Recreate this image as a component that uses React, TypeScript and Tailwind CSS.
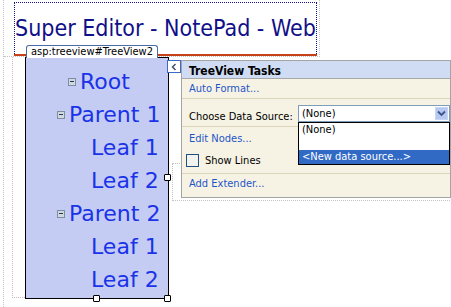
import React from 'react';

const ui = "font-['DejaVu_Sans',sans-serif] [font-stretch:condensed]";

const ExpandBox = () => (
  <span className="inline-flex w-[8px] h-[8px] items-center justify-center border border-[#7b8ea3] bg-[#d2d8e0]">
    <span className="block w-[4px] h-[1px] bg-[#22364f]" />
  </span>
);

const TreeRow = ({ label, indent, expandable }: { label: string; indent: string; expandable?: boolean }) => (
  <div className={`flex items-center h-[33px] ${indent}`}>
    {expandable && (
      <span className="mr-[4px] flex">
        <ExpandBox />
      </span>
    )}
    <span>{label}</span>
  </div>
);

const Handle = ({ className }: { className: string }) => (
  <div className={`absolute w-[7px] h-[7px] bg-white border border-black rounded-[1px] ${className}`} />
);

export default function App() {
  return (
    <div className="relative w-[451px] h-[307px] bg-white overflow-hidden">
      {/* design surface guides */}
      <div className="absolute left-[3px] top-0 h-[307px] border-l border-dotted border-[#c4c4c4]" />
      <div className="absolute left-[12px] top-[57px] w-[13px] h-[241px] border-l border-b border-dotted border-[#d0b8b8]" />
      <div className="absolute left-[172px] top-[163px] w-[300px] h-[38px] border-l border-t border-b border-dotted border-[#c4c4c4]" />

      {/* heading block */}
      <div className="ml-[4px] w-[316px] h-[57px] pt-[2px] border-r border-b border-dotted border-[#c4c4c4]">
        <h1
          className={`ml-[10px] w-[303px] h-[52px] pt-[14px] border-t border-l border-r border-dotted border-[#101088] text-[23px] leading-[23px] text-[#101088] whitespace-nowrap ${ui}`}
        >
          Super Editor - NotePad - Web
        </h1>
        <div className="ml-[10px] w-[303px] h-[2px] bg-[#c8401a]" />
      </div>

      {/* treeview control */}
      <div className="ml-[25px] w-[144px] h-[242px] border border-black bg-[#c4ccf4] pt-[7px] font-['DejaVu_Sans',sans-serif] text-[22px] leading-[33px] text-[#1a33e8] whitespace-nowrap">
        <TreeRow label="Root" indent="pl-[42px]" expandable />
        <TreeRow label="Parent 1" indent="pl-[31px]" expandable />
        <TreeRow label="Leaf 1" indent="pl-[65px]" />
        <TreeRow label="Leaf 2" indent="pl-[65px]" />
        <TreeRow label="Parent 2" indent="pl-[31px]" expandable />
        <TreeRow label="Leaf 1" indent="pl-[65px]" />
        <TreeRow label="Leaf 2" indent="pl-[65px]" />
      </div>

      {/* control tag */}
      <div
        className={`absolute left-[26px] top-[45px] h-[13px] px-[4px] bg-white border border-b-0 border-[#4a6aa8] rounded-t-[3px] text-[11px] leading-[12px] text-black ${ui}`}
      >
        asp:treeview#TreeView2
      </div>

      <Handle className="left-[164px] top-[174px]" />
      <Handle className="left-[93px] top-[295px]" />
      <Handle className="left-[164px] top-[295px]" />

      {/* smart tag glyph */}
      <div className="absolute left-[167px] top-[60px] w-[14px] h-[13px] bg-white border border-[#3a6ac8] flex items-center justify-center">
        <svg width="6" height="8" viewBox="0 0 6 8">
          <path d="M4.5 1 L1.5 4 L4.5 7" fill="none" stroke="#3a4a6a" strokeWidth="1.4" />
        </svg>
      </div>

      {/* tasks panel */}
      <div className={`absolute left-[181px] top-[60px] w-[270px] h-[138px] border border-[#a4a4a4] bg-[#f6f3e4] text-[11px] leading-[13px] ${ui}`}>
        <div className="h-[18px] pt-[3px] pl-[7px] bg-[#cfdcf3] border-b border-[#a8a8a8] text-[12px] leading-[14px] font-bold text-black">
          TreeView Tasks
        </div>
        <div className="h-[20px] pt-[3px] pl-[7px] border-b border-[#dcd5ba] text-[#1f55c8]">Auto Format...</div>
        <div className="flex items-start h-[28px] pl-[7px] border-b border-[#dcd5ba] text-black">
          <div className="w-[109px] pt-[11px]">Choose Data Source:</div>
          <div className="mt-[6px] w-[152px] h-[17px] border border-[#7f9db9] bg-white flex items-center pl-[3px]">
            <span>(None)</span>
            <div className="ml-auto mr-[1px] w-[13px] h-[13px] bg-[#b7c8f2] border border-[#c8d6f6] flex items-center justify-center">
              <svg width="9" height="7" viewBox="0 0 9 7">
                <path d="M1 1.5 L4.5 5 L8 1.5" fill="none" stroke="#3d5486" strokeWidth="1.8" />
              </svg>
            </div>
          </div>
        </div>
        <div className="h-[21px] pt-[5px] pl-[7px] text-[#1f55c8]">Edit Nodes...</div>
        <div className="h-[26px] flex items-center gap-[6px] pl-[4px] border-b border-[#dcd5ba] text-black">
          <span className="w-[13px] h-[13px] border border-[#1c5180] bg-[#f2f2ee]" />
          <span>Show Lines</span>
        </div>
        <div className="h-[23px] pt-[3px] pl-[7px] text-[#1f55c8]">Add Extender...</div>
      </div>

      {/* open drop-down list */}
      <div className={`absolute left-[298px] top-[122px] w-[152px] h-[43px] border border-black bg-white text-[11px] leading-[13px] text-black ${ui}`}>
        <div className="h-[13px] pl-[3px]">(None)</div>
        <div className="h-[14px]" />
        <div className="h-[14px] pl-[3px] bg-[#316ac5] text-white">&lt;New data source...&gt;</div>
      </div>
    </div>
  );
}
